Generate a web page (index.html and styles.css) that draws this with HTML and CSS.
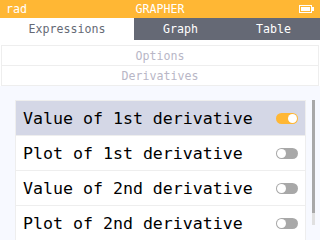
FILE: index.html
```html
<!DOCTYPE html>
<html>
<head>
    <title>Grapher - Options</title>
    <link rel="stylesheet" href="styles.css">
</head>
<body>
    <div class="screen">
        <!-- Title bar -->
        <div class="title-bar">
            <span class="angle">rad</span>
            <span class="app-name">GRAPHER</span>
            <svg class="battery" width="15" height="8" viewBox="0 0 15 8">
                <rect x="0.5" y="0.5" width="12" height="7" fill="none" stroke="#fff"/>
                <rect x="2" y="2" width="9" height="4" fill="#fff"/>
                <rect x="13" y="2" width="2" height="4" fill="#fff"/>
            </svg>
        </div>

        <!-- Tabs -->
        <div class="tabs">
            <div class="tab active">Expressions</div>
            <div class="tab">Graph</div>
            <div class="tab">Table</div>
        </div>

        <!-- Breadcrumb -->
        <div class="crumbs">
            <div class="crumb">Options</div>
            <div class="crumb">Derivatives</div>
        </div>

        <!-- Switch list -->
        <div class="content">
            <div class="list">
                <div class="row selected">
                    <span>Value of 1st derivative</span>
                    <span class="switch on"></span>
                </div>
                <div class="row">
                    <span>Plot of 1st derivative</span>
                    <span class="switch"></span>
                </div>
                <div class="row">
                    <span>Value of 2nd derivative</span>
                    <span class="switch"></span>
                </div>
                <div class="row">
                    <span>Plot of 2nd derivative</span>
                    <span class="switch"></span>
                </div>
            </div>
            <div class="scrollbar">
                <div class="thumb"></div>
            </div>
        </div>
    </div>
</body>
</html>
```

FILE: styles.css
```css
body {
    margin: 0;
    padding: 0;
    background: #fff;
    font-family: "DejaVu Sans Mono", monospace;
}
.screen {
    width: 320px;
    height: 240px;
    overflow: hidden;
    background: #fff;
}
.title-bar {
    height: 18px;
    background: #FFB734;
    color: #fff;
    font-size: 11.6px;
    display: flex;
    align-items: center;
    position: relative;
    padding: 0 6px;
}
.app-name {
    position: absolute;
    left: 0;
    right: 0;
    text-align: center;
}
.battery {
    margin-left: auto;
}
.tabs {
    display: flex;
    height: 22px;
    background: #656975;
    font-size: 11.6px;
}
.tab {
    width: 93px;
    display: flex;
    align-items: center;
    justify-content: center;
    color: #fff;
}
.tab.active {
    width: 134px;
    background: #fff;
    color: #656975;
}
.crumbs {
    padding-top: 5px;
    margin: 0 1px;
}
.crumb {
    height: 19px;
    border: 1px solid #EEEEEE;
    border-bottom: none;
    display: flex;
    align-items: center;
    justify-content: center;
    color: #B8B6C6;
    font-size: 11.6px;
}
.crumb:last-child {
    border-bottom: 1px solid #EEEEEE;
}
.content {
    background: #F7F9FF;
    height: 160px;
    display: flex;
    padding: 14px 5px 0 15px;
    gap: 6px;
}
.list {
    width: 289px;
    border: 1px solid #EEEEEE;
    border-bottom: none;
    background: #fff;
    align-self: flex-start;
}
.row {
    height: 34px;
    display: flex;
    align-items: center;
    justify-content: space-between;
    padding: 0 7px;
    font-size: 16.6px;
    color: #000;
    border-bottom: 1px solid #EEEEEE;
}
.row.selected {
    background: #D4D7E6;
}
.switch {
    width: 22px;
    height: 11px;
    border-radius: 6px;
    background: #A8A8A8;
    position: relative;
}
.switch::after {
    content: "";
    position: absolute;
    top: 1px;
    left: 1px;
    width: 9px;
    height: 9px;
    border-radius: 50%;
    background: #fff;
}
.switch.on {
    background: #FFB734;
}
.switch.on::after {
    left: 12px;
}
.scrollbar {
    width: 3px;
    height: 125px;
    background: #E0E0E0;
}
.thumb {
    height: 113px;
    background: #A8A8A8;
}
```
